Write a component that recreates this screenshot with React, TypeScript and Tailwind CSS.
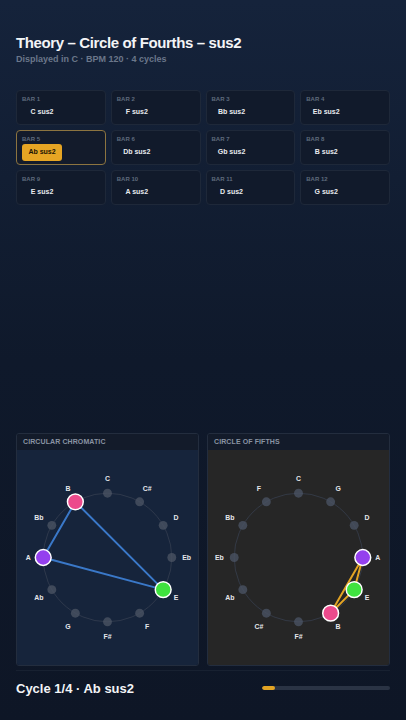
const bars = [
  "C sus2", "F sus2", "Bb sus2", "Eb sus2",
  "Ab sus2", "Db sus2", "Gb sus2", "B sus2",
  "E sus2", "A sus2", "D sus2", "G sus2",
];

const chromatic = ["C", "C#", "D", "Eb", "E", "F", "F#", "G", "Ab", "A", "Bb", "B"];
const fifths = ["C", "G", "D", "A", "E", "B", "F#", "C#", "Ab", "Eb", "Bb", "F"];

const noteColors: Record<string, string> = {
  A: "#9440ee",
  B: "#ec4a8c",
  E: "#3fe23f",
};

const W = 183;
const H = 215;
const CX = 91.5;
const CY = 107.5;
const R = 65;
const LR = 80;

function pos(i: number, r: number) {
  const a = (i * 30 * Math.PI) / 180;
  return { x: CX + r * Math.sin(a), y: CY - r * Math.cos(a) };
}

function Wheel({ notes, active, line }: { notes: string[]; active: string[]; line: string }) {
  const pts = active.map((n) => pos(notes.indexOf(n), R));
  return (
    <svg width={W} height={H} viewBox={`0 0 ${W} ${H}`}>
      <circle cx={CX} cy={CY} r={R} fill="none" stroke="#3a4354" strokeOpacity={0.7} strokeWidth={1} />
      <polygon
        points={pts.map((p) => `${p.x},${p.y}`).join(" ")}
        fill="none"
        stroke={line}
        strokeWidth={2}
        strokeLinejoin="round"
      />
      {notes.map((n, i) => {
        const p = pos(i, R);
        const l = pos(i, LR);
        const on = active.includes(n);
        return (
          <g key={n}>
            {on ? (
              <circle cx={p.x} cy={p.y} r={8} fill={noteColors[n]} stroke="#ffffff" strokeWidth={1.5} />
            ) : (
              <circle cx={p.x} cy={p.y} r={4.5} fill="#4a5263" fillOpacity={0.8} />
            )}
            <text
              x={l.x}
              y={l.y}
              textAnchor="middle"
              dominantBaseline="central"
              fill="#e5e7eb"
              fontSize={7}
              fontWeight={700}
              fontFamily="'Liberation Sans', Arial, sans-serif"
            >
              {n}
            </text>
          </g>
        );
      })}
    </svg>
  );
}

function Panel({ title, body, children }: { title: string; body: string; children: React.ReactNode }) {
  return (
    <div className="flex-1 overflow-hidden rounded-[3px] border border-[#232d3e]">
      <div className="flex h-[16px] items-center bg-[#131b2a] px-[6px] text-[7px] font-bold uppercase tracking-[0.1px] text-[#8a93a3]">
        {title}
      </div>
      <div className={`flex h-[215px] items-center justify-center ${body}`}>{children}</div>
    </div>
  );
}

export default function App() {
  return (
    <div
      className="flex h-[720px] w-full flex-col bg-gradient-to-b from-[#15233b] via-[#0f192b] to-[#0e1626] px-4 text-white"
      style={{ fontFamily: "'Liberation Sans', Arial, sans-serif" }}
    >
      {/* Header */}
      <div className="pt-[33px]">
        <h1 className="text-[15px] font-bold leading-[20px] tracking-tight text-[#f3f4f6]">
          Theory – Circle of Fourths – sus2
        </h1>
        <p className="text-[9px] font-bold leading-[12px] text-[#6b778a]">
          Displayed in C · BPM 120 · 4 cycles
        </p>
      </div>

      {/* Bars */}
      <div className="mt-[25px] grid grid-cols-4 gap-[5px]">
        {bars.map((b, i) => {
          const current = i === 4;
          return (
            <div
              key={b}
              className={`h-[35px] rounded-[4px] border px-[5px] pt-[4px] ${
                current ? "border-[#8c7440] bg-[#131b2b]" : "border-[#1e2839] bg-[#111a2b]"
              }`}
            >
              <div className="text-[6px] font-bold leading-[8px] text-[#5f6b7d]">BAR {i + 1}</div>
              <div
                className={`mt-[1px] flex h-[17px] w-[40px] items-center justify-center rounded-[3px] text-[7px] font-bold ${
                  current ? "bg-[#e6a524] text-[#1a1405]" : "text-[#e8eaee]"
                }`}
              >
                {b}
              </div>
            </div>
          );
        })}
      </div>

      <div className="flex-1" />

      {/* Wheels */}
      <div className="flex gap-[8px]">
        <Panel title="Circular Chromatic" body="bg-[#16243b]">
          <Wheel notes={chromatic} active={["B", "E", "A"]} line="#3a78c8" />
        </Panel>
        <Panel title="Circle of Fifths" body="bg-[#262626]">
          <Wheel notes={fifths} active={["A", "E", "B"]} line="#e3a424" />
        </Panel>
      </div>

      {/* Footer */}
      <div className="mt-[4px] flex h-[50px] items-start justify-between border-t border-[#182131] pt-[10px]">
        <div className="text-[13px] font-bold leading-[16px] text-[#f3f4f6]">Cycle 1/4 · Ab sus2</div>
        <div className="mt-[5px] h-[4px] w-[128px] overflow-hidden rounded-full bg-[#2a3344]">
          <div className="h-full rounded-full bg-[#e3a424]" style={{ width: "10.5%" }} />
        </div>
      </div>
    </div>
  );
}
